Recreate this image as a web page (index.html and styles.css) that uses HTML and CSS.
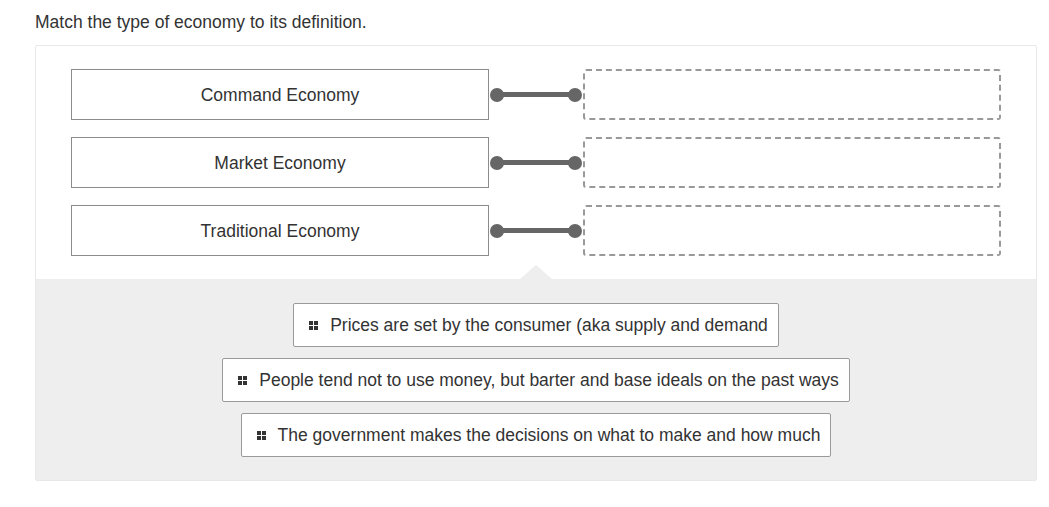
FILE: index.html
```html
<!DOCTYPE html>
<html>
<head>
<meta charset="utf-8">
<link rel="stylesheet" href="styles.css">
</head>
<body>
<p class="prompt">Match the type of economy to its definition.</p>
<div class="panel">
  <div class="pairs">
    <div class="row">
      <div class="term">Command Economy</div>
      <div class="link"><span class="dot"></span><span class="bar"></span><span class="dot"></span></div>
      <div class="slot"></div>
    </div>
    <div class="row">
      <div class="term">Market Economy</div>
      <div class="link"><span class="dot"></span><span class="bar"></span><span class="dot"></span></div>
      <div class="slot"></div>
    </div>
    <div class="row">
      <div class="term">Traditional Economy</div>
      <div class="link"><span class="dot"></span><span class="bar"></span><span class="dot"></span></div>
      <div class="slot"></div>
    </div>
  </div>
  <div class="bank">
    <span class="notch"></span>
    <div class="chip"><span class="grip"><i></i><i></i><i></i><i></i></span>Prices are set by the consumer (aka supply and demand</div>
    <div class="chip"><span class="grip"><i></i><i></i><i></i><i></i></span>People tend not to use money, but barter and base ideals on the past ways</div>
    <div class="chip"><span class="grip"><i></i><i></i><i></i><i></i></span>The government makes the decisions on what to make and how much</div>
  </div>
</div>
</body>
</html>
```

FILE: styles.css
```css
html, body {
  margin: 0;
  padding: 0;
  background: #fff;
  font-family: "Liberation Sans", Arial, sans-serif;
  color: #333;
}
.prompt {
  box-sizing: border-box;
  margin: 0;
  padding: 12px 0 0 35px;
  font-size: 17.5px;
  line-height: 20px;
  height: 45px;
}
.panel {
  margin: 0 12px 0 35px;
  border: 1px solid #e8e8e8;
  border-radius: 2px;
}
.pairs {
  padding: 23px 0 23px 35px;
  display: flex;
  flex-direction: column;
  gap: 17px;
}
.row {
  display: flex;
  align-items: center;
  height: 51px;
}
.term {
  box-sizing: border-box;
  width: 418px;
  height: 51px;
  padding-top: 2px;
  border: 1px solid #8c8c8c;
  display: flex;
  align-items: center;
  justify-content: center;
  font-size: 17.5px;
  color: #333;
}
.link {
  width: 94px;
  display: flex;
  align-items: center;
  padding-left: 1px;
  box-sizing: border-box;
}
.dot {
  width: 14px;
  height: 14px;
  border-radius: 50%;
  background: #666;
  flex: none;
}
.bar {
  flex: none;
  width: 66px;
  height: 5px;
  background: #666;
  margin: 0 -1px;
}
.slot {
  box-sizing: border-box;
  width: 418px;
  height: 51px;
  border: 2px dashed #999;
  border-radius: 3px;
}
.bank {
  position: relative;
  background: #eee;
  padding: 24px 0 23px;
  display: flex;
  flex-direction: column;
  align-items: center;
  gap: 11px;
}
.notch {
  position: absolute;
  top: -14px;
  left: 484px;
  width: 0;
  height: 0;
  border-left: 16px solid transparent;
  border-right: 16px solid transparent;
  border-bottom: 14px solid #eee;
}
.chip {
  box-sizing: border-box;
  height: 44px;
  background: #fff;
  border: 1px solid #9a9a9a;
  border-radius: 2px;
  display: flex;
  align-items: center;
  padding: 0 10px 0 15px;
  font-size: 17.5px;
  color: #333;
  white-space: nowrap;
}
.grip {
  display: grid;
  grid-template-columns: 4px 4px;
  grid-template-rows: 4px 4px;
  gap: 1px;
  margin-right: 12px;
}
.grip i {
  display: block;
  background: #333;
}
```
